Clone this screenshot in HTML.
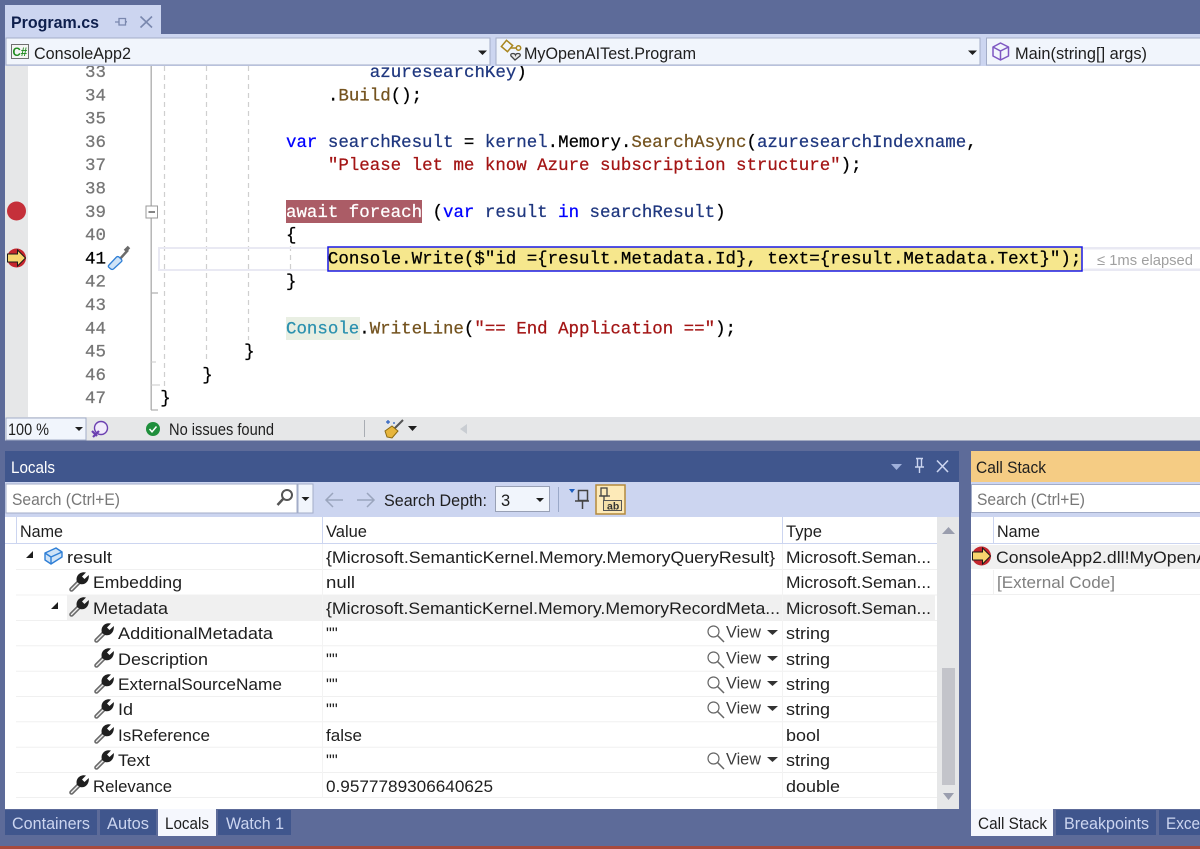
<!DOCTYPE html>
<html><head><meta charset="utf-8"><title>Program.cs</title>
<style>
html,body{margin:0;padding:0;background:#5d6b99}
svg{display:block;position:absolute;left:0;top:0}
text{white-space:pre}
.u{font-family:"Liberation Sans",sans-serif;font-size:16.5px;fill:#1e1e1e}
.c{font-family:"Liberation Mono",monospace;font-size:17.45px;fill:#000;stroke:#000;stroke-width:.25px}
.n{font-family:"Liberation Mono",monospace;font-size:17.45px;fill:#767676;stroke:#767676;stroke-width:.25px}
.k{fill:#0000ff;stroke:#0000ff}.l{fill:#1f377f;stroke:#1f377f}.m{fill:#74531f;stroke:#74531f}.s{fill:#a31515;stroke:#a31515}.t{fill:#2b91af;stroke:#2b91af}.b{fill:#000;stroke:#000}.wh{fill:#fff;stroke:#fff}
</style></head><body>
<svg width="1200" height="849" viewBox="0 0 1200 849" xmlns="http://www.w3.org/2000/svg">
<defs>
<g id="w">
<path d="M2.500 17.500 L10.500 9.500" stroke="#6a6a6a" stroke-width="4.600" stroke-linecap="round" fill="none"/>
<path d="M2.500 17.500 L10.500 9.500" stroke="#f0f0f0" stroke-width="1.400" stroke-linecap="round" fill="none"/>
<path d="M8 10 C6 4 11 -1 17 .5 L13 4.500 L15.500 7 L19.800 3 C20.500 9 16 13.500 11 12 Z" fill="#1f1f1f"/>
</g>
<g id="v">
<circle cx="6.500" cy="6.500" r="5.500" fill="none" stroke="#666" stroke-width="1.200"/>
<path d="M10.500 10.500 L17 17" stroke="#666" stroke-width="1.500"/>
<text class="u" x="19" y="12.500" textLength="35" lengthAdjust="spacingAndGlyphs" style="fill:#3c3c3c">View</text>
<path d="M60 5 H71 L65.500 10 Z" fill="#333"/>
</g>
<g id="ar">
<circle cx="0" cy="0" r="9.500" fill="#c4262e"/>
<path d="M-9 -4 H1 V-8 L9 0 L1 8 V4 H-9 Z" fill="#f7d56e" stroke="#1a1a1a" stroke-width="1"/>
</g>
<clipPath id="ed"><rect x="5" y="66" width="1195" height="351"/></clipPath>
</defs>

<rect width="1200" height="849" fill="#5d6b99"/>
<rect x="0" y="846" width="1200" height="3" fill="#a84a3c"/>

<!-- Editor -->
<rect x="5" y="65" width="1195" height="352" fill="#fff"/>
<rect x="5" y="65" width="23" height="352" fill="#e6e7e8"/>
<rect x="150.500" y="65" width="1.400" height="345" fill="#b0b0b0"/>
<path d="M164.500 66V386M206.500 66V362M248.500 66V340M290.500 246V270" stroke="#cfcfcf" stroke-width="1.200" stroke-dasharray="5 4" fill="none"/>
<path d="M151 293H158M151 410H158" stroke="#b0b0b0" stroke-width="1.300"/>
<path d="M151 362H156M151 385H160" stroke="#c9c9c9" stroke-width="1"/>
<rect x="146" y="206" width="11.500" height="12" fill="#fff" stroke="#9a9a9a" stroke-width="1"/>
<path d="M148.500 212H155" stroke="#444" stroke-width="1.300"/>

<rect x="159" y="248" width="1041" height="22" fill="none" stroke="#e9e9f3" stroke-width="2"/>
<rect x="286" y="200" width="136" height="23" fill="#ab5c66"/>
<rect x="286" y="317" width="74" height="23" fill="#e9efe3"/>
<rect x="328" y="247" width="754" height="24" fill="#f6e78d" stroke="#1a1ae6" stroke-width="1.500"/>

<g clip-path="url(#ed)"><g transform="translate(0,-.7)">
<text class="n" x="85" y="77.500">33</text>
<text class="n" x="85" y="101">34</text>
<text class="n" x="85" y="124.300">35</text>
<text class="n" x="85" y="147.600">36</text>
<text class="n" x="85" y="170.900">37</text>
<text class="n" x="85" y="194.200">38</text>
<text class="n" x="85" y="217.500">39</text>
<text class="n" x="85" y="240.800">40</text>
<text class="n b" x="85" y="264.100">41</text>
<text class="n" x="85" y="287.400">42</text>
<text class="n" x="85" y="310.700">43</text>
<text class="n" x="85" y="334">44</text>
<text class="n" x="85" y="357.300">45</text>
<text class="n" x="85" y="380.600">46</text>
<text class="n" x="85" y="403.900">47</text>

<text class="c l" x="369.800" y="77.500">azuresearchKey<tspan class="b">)</tspan></text>
<text class="c" x="327.900" y="101">.<tspan class="m">Build</tspan>();</text>
<text class="c" x="286" y="147.600"><tspan class="k">var</tspan> <tspan class="l">searchResult</tspan> = <tspan class="l">kernel</tspan>.Memory.<tspan class="m">SearchAsync</tspan>(<tspan class="l">azuresearchIndexname</tspan>,</text>
<text class="c s" x="327.900" y="170.900">"Please let me know Azure subscription structure"<tspan class="b">);</tspan></text>
<text class="c" x="286" y="217.500"><tspan class="wh">await foreach</tspan> (<tspan class="k">var</tspan> <tspan class="l">result</tspan> <tspan class="k">in</tspan> <tspan class="l">searchResult</tspan>)</text>
<text class="c" x="286" y="240.800">{</text>
<text class="c" x="327.900" y="264.100">Console.Write($"id ={result.Metadata.Id}, text={result.Metadata.Text}");</text>
<text class="c" x="286" y="287.400">}</text>
<text class="c" x="286" y="334"><tspan class="t">Console</tspan>.<tspan class="m">WriteLine</tspan>(<tspan class="s">"== End Application =="</tspan>);</text>
<text class="c" x="244.100" y="357.300">}</text>
<text class="c" x="202.200" y="380.600">}</text>
<text class="c" x="160.300" y="403.900">}</text>
</g></g>

<rect x="1088" y="248" width="112" height="22" fill="#fff"/>
<path d="M1084 248.500H1200M1084 269.500H1200" stroke="#e9e9f3" stroke-width="2"/>
<text class="u" x="1097" y="265" textLength="96" lengthAdjust="spacingAndGlyphs" style="fill:#a0a0a0;font-size:15px">≤ 1ms elapsed</text>

<circle cx="16.500" cy="211" r="9.500" fill="#c5303a"/>
<use href="#ar" x="16.500" y="258"/>
<!-- screwdriver icon -->
<path d="M119 260 L128 250" stroke="#6b6b6b" stroke-width="2.500"/>
<path d="M125 251 L129 247" stroke="#6b6b6b" stroke-width="3.500"/>
<path d="M109 265 L116.500 257 Q118 256 119.500 257.500 L121.500 259.500 Q122.500 261 121 262 L113.500 269 Q112 270 110.500 268.700 L108.500 267 Q108 266 109 265 Z" fill="#cfe3f7" stroke="#2f7fd6" stroke-width="1.300"/>

<!-- Tab strip -->
<rect x="5" y="5" width="156" height="29" fill="#ccd5f0"/>
<rect x="5" y="34" width="1195" height="3" fill="#ccd5f0"/>
<text class="u" x="11" y="28" textLength="88" lengthAdjust="spacingAndGlyphs" style="font-weight:bold;fill:#0e1f4d;font-size:16.500px">Program.cs</text>
<path d="M115 22H119M119 18.500H125.500V25H119Z M125.500 21.800H127" fill="none" stroke="#7a88ae" stroke-width="1.300"/>
<path d="M140.500 16.500L152 27.500M152 16.500L140.500 27.500" stroke="#7a88ae" stroke-width="1.600"/>

<!-- Nav bar -->
<rect x="0" y="34" width="5" height="32" fill="#5d6b99"/>
<rect x="5" y="37" width="1195" height="29" fill="#ccd5f0"/>
<rect x="6" y="38" width="484" height="27" fill="#f1f5fc" stroke="#a3adc8" stroke-width="1"/>
<rect x="496" y="38" width="484" height="27" fill="#f1f5fc" stroke="#a3adc8" stroke-width="1"/>
<rect x="986.500" y="38" width="220" height="27" fill="#f1f5fc" stroke="#a3adc8" stroke-width="1"/>
<path d="M478 50.500H487L482.500 55Z M968 50.500H977L972.500 55Z" fill="#1e1e1e"/>
<rect x="11.500" y="44.500" width="17" height="14" fill="#f4f4f4" stroke="#6f6f6f" stroke-width="1"/>
<text x="12.500" y="56" style="font-family:'Liberation Sans',sans-serif;font-weight:bold;font-size:11.500px;fill:#1d8a1d">C#</text>
<text class="u" x="34" y="59" textLength="97" lengthAdjust="spacingAndGlyphs">ConsoleApp2</text>
<g fill="none" stroke="#a9861f" stroke-width="1.500">
<rect x="503" y="42" width="8" height="8" transform="rotate(40 507 46)"/>
<path d="M511 48 H516"/>
<circle cx="518.500" cy="48" r="2.200"/>
</g>
<path d="M515 57 L511 53 Q510 50.500 513 50.500 Q515 50.500 515.500 52 Q516 50.500 518 50.500 Q521 50.500 520 53 Z" transform="translate(0 3)" fill="#e8e8e8" stroke="#444" stroke-width="1.300"/>
<text class="u" x="524" y="59" textLength="172" lengthAdjust="spacingAndGlyphs">MyOpenAITest.Program</text>
<g fill="none" stroke="#7e57c2" stroke-width="1.500" stroke-linejoin="round">
<path d="M1000.500 43 L1008.500 47 V56 L1000.500 60 L993 56 V47 Z"/>
<path d="M993 47 L1000.500 51 L1008.500 47 M1000.500 51 V60"/>
</g>
<text class="u" x="1015" y="59" textLength="132" lengthAdjust="spacingAndGlyphs">Main(string[] args)</text>

<!-- Status bar -->
<rect x="5" y="417" width="1195" height="23.500" fill="#e6e7e8"/>
<rect x="6" y="418" width="80" height="22" fill="#f1f5fc" stroke="#a3adc8" stroke-width="1"/>
<text class="u" x="8" y="435" textLength="41" lengthAdjust="spacingAndGlyphs">100 %</text>
<path d="M75 427H83L79 431Z" fill="#1e1e1e"/>
<circle cx="101" cy="428" r="6.500" fill="#f1eafb" stroke="#6b3fb0" stroke-width="1.400"/>
<path d="M99 428h.01M103 428h.01" stroke="#6b3fb0" stroke-width="1.500"/>
<path d="M93 437 L99 431 M92 431 L97 436" stroke="#6b3fb0" stroke-width="2.200"/>
<circle cx="153" cy="429" r="7" fill="#1f8f3c"/>
<path d="M149.500 429 L152 431.800 L156.500 426.500" fill="none" stroke="#fff" stroke-width="1.500"/>
<text class="u" x="169" y="435" textLength="105" lengthAdjust="spacingAndGlyphs">No issues found</text>
<rect x="364" y="420" width="1" height="17" fill="#a9adb3"/>
<path d="M403 420 L394 429" stroke="#555" stroke-width="2"/>
<path d="M385 431 L392 426 L398 431 L392 438 L387 437 Z" fill="#e6b53c" stroke="#8a6a10" stroke-width="1"/>
<path d="M386 422h4M388 420v4M393 423h2" stroke="#2a5fbf" stroke-width="1.200"/>
<path d="M408 426H417L412.500 431Z" fill="#1e1e1e"/>
<path d="M467 424V434L460 429Z" fill="#c9cdd2"/>

<!-- Locals -->
<rect x="5" y="451" width="954" height="31" fill="#40568d"/>
<rect x="5" y="482" width="954" height="35" fill="#ccd5f0"/>
<rect x="5" y="517" width="932" height="292" fill="#fff"/>
<rect x="937" y="517" width="22" height="292" fill="#e6e7e8"/>
<rect x="942" y="668" width="13" height="117" fill="#c3c4ca"/>
<path d="M942 534H955L948.500 527Z M943 793H954L948.500 800Z" fill="#9a9eae"/>
<text class="u" x="11" y="473" textLength="44" lengthAdjust="spacingAndGlyphs" style="fill:#fff">Locals</text>
<path d="M891 464H902L896.500 470Z" fill="#9fb0db"/>
<path d="M916 458.500H923M917.500 459V467H921.500V459M915 467H924M919.500 467V473" fill="none" stroke="#ccd5f0" stroke-width="1.400"/>
<path d="M937 460.500L948 472M948 460.500L937 472" stroke="#ccd5f0" stroke-width="1.600"/>

<rect x="6" y="484" width="291" height="29" fill="#fff" stroke="#a3adc8" stroke-width="1"/>
<text class="u" x="12" y="505" textLength="108" lengthAdjust="spacingAndGlyphs" style="fill:#777">Search (Ctrl+E)</text>
<circle cx="287" cy="495" r="5" fill="none" stroke="#555" stroke-width="2"/>
<path d="M283.500 498.500 L277.500 505" stroke="#555" stroke-width="2.500"/>
<rect x="298" y="484" width="15" height="29" fill="#f1f5fc" stroke="#a3adc8" stroke-width="1"/>
<path d="M301.500 497H309.500L305.500 501Z" fill="#1e1e1e"/>
<path d="M343 500H326M333 493L326 500L333 507" fill="none" stroke="#9aa5bd" stroke-width="1.500"/>
<path d="M357 500H374M367 493L374 500L367 507" fill="none" stroke="#9aa5bd" stroke-width="1.500"/>
<text class="u" x="384" y="506" textLength="103" lengthAdjust="spacingAndGlyphs">Search Depth:</text>
<rect x="495.500" y="486.500" width="54" height="25" fill="#f1f5fc" stroke="#98a0b5" stroke-width="1"/>
<text class="u" x="501" y="506">3</text>
<path d="M536 498H544L540 502Z" fill="#1e1e1e"/>
<rect x="558" y="487" width="1" height="25" fill="#9aa8c8"/>
<path d="M569 489H575L572 493Z" fill="#1f5fbf"/>
<rect x="578.500" y="490.500" width="9" height="10" fill="none" stroke="#444" stroke-width="1.500"/>
<path d="M575 501H589M582.500 501V509" stroke="#444" stroke-width="1.500"/>
<rect x="596" y="485" width="29" height="29" fill="#fdeab8" stroke="#b38a3c" stroke-width="1.500"/>
<rect x="601" y="488" width="6" height="8" fill="none" stroke="#444" stroke-width="1.300"/>
<path d="M599 496H610M604 496V503" stroke="#444" stroke-width="1.300"/>
<rect x="603.500" y="500.500" width="18" height="10" fill="#f4dfa8" stroke="#555" stroke-width="1"/>
<text x="607" y="509.500" style="font-family:'Liberation Sans',sans-serif;font-weight:bold;font-size:10.500px;fill:#333">ab</text>

<!-- Locals grid -->
<path d="M5 543.500H937" stroke="#ccd5f0" stroke-width="1"/>
<path d="M16.500 517V543M322.500 517V543M782.500 517V543" stroke="#ccd5f0" stroke-width="1"/>
<rect x="67" y="595" width="868" height="25" fill="#f0f0f0"/>
<path d="M16 569.500H937M16 595H937M16 620.500H937M16 645.800H937M16 671.200H937M16 696.500H937M16 721.800H937M16 747.200H937M16 772.500H937M16 797.500H937" stroke="#f0f0f0" stroke-width="1"/>
<path d="M322.500 544V798M782.500 544V798" stroke="#f3f3f3" stroke-width="1"/>
<text class="u" x="20" y="537" textLength="43" lengthAdjust="spacingAndGlyphs">Name</text>
<text class="u" x="326" y="537" textLength="41" lengthAdjust="spacingAndGlyphs">Value</text>
<text class="u" x="786" y="537" textLength="36" lengthAdjust="spacingAndGlyphs">Type</text>

<path d="M33 551V558H26Z M58 602V609H51Z" fill="#1e1e1e"/>
<g fill="#cfe3f7" stroke="#2f7fd6" stroke-width="1.400" stroke-linejoin="round">
<path d="M45 553 L56 548 L62 552 L62 557 L51 564 L45 560 Z"/>
<path d="M45 553 L51 557 L62 552 M51 557V564" fill="none"/>
</g>
<text class="u" x="67" y="563" textLength="45" lengthAdjust="spacingAndGlyphs">result</text>
<text class="u" x="326" y="563" textLength="449" lengthAdjust="spacingAndGlyphs">{Microsoft.SemanticKernel.Memory.MemoryQueryResult}</text>
<text class="u" x="786" y="563" textLength="145" lengthAdjust="spacingAndGlyphs">Microsoft.Seman...</text>

<use href="#w" x="69" y="572"/>
<text class="u" x="93" y="588" textLength="89" lengthAdjust="spacingAndGlyphs">Embedding</text>
<text class="u" x="326" y="588" textLength="29" lengthAdjust="spacingAndGlyphs">null</text>
<text class="u" x="786" y="588" textLength="145" lengthAdjust="spacingAndGlyphs">Microsoft.Seman...</text>

<use href="#w" x="69" y="597"/>
<text class="u" x="93" y="614" textLength="75" lengthAdjust="spacingAndGlyphs">Metadata</text>
<text class="u" x="326" y="614" textLength="454" lengthAdjust="spacingAndGlyphs">{Microsoft.SemanticKernel.Memory.MemoryRecordMeta...</text>
<text class="u" x="786" y="614" textLength="145" lengthAdjust="spacingAndGlyphs">Microsoft.Seman...</text>

<use href="#w" x="94" y="623"/>
<text class="u" x="118" y="639" textLength="155" lengthAdjust="spacingAndGlyphs">AdditionalMetadata</text>
<text class="u" x="326" y="639">""</text>
<use href="#v" x="707" y="625"/>
<text class="u" x="786" y="639" textLength="44" lengthAdjust="spacingAndGlyphs">string</text>

<use href="#w" x="94" y="648"/>
<text class="u" x="118" y="665" textLength="90" lengthAdjust="spacingAndGlyphs">Description</text>
<text class="u" x="326" y="665">""</text>
<use href="#v" x="707" y="651"/>
<text class="u" x="786" y="665" textLength="44" lengthAdjust="spacingAndGlyphs">string</text>

<use href="#w" x="94" y="674"/>
<text class="u" x="118" y="690" textLength="164" lengthAdjust="spacingAndGlyphs">ExternalSourceName</text>
<text class="u" x="326" y="690">""</text>
<use href="#v" x="707" y="676"/>
<text class="u" x="786" y="690" textLength="44" lengthAdjust="spacingAndGlyphs">string</text>

<use href="#w" x="94" y="699"/>
<text class="u" x="118" y="715" textLength="15" lengthAdjust="spacingAndGlyphs">Id</text>
<text class="u" x="326" y="715">""</text>
<use href="#v" x="707" y="701"/>
<text class="u" x="786" y="715" textLength="44" lengthAdjust="spacingAndGlyphs">string</text>

<use href="#w" x="94" y="724"/>
<text class="u" x="118" y="741" textLength="92" lengthAdjust="spacingAndGlyphs">IsReference</text>
<text class="u" x="326" y="741" textLength="36" lengthAdjust="spacingAndGlyphs">false</text>
<text class="u" x="786" y="741" textLength="34" lengthAdjust="spacingAndGlyphs">bool</text>

<use href="#w" x="94" y="750"/>
<text class="u" x="118" y="766" textLength="32" lengthAdjust="spacingAndGlyphs">Text</text>
<text class="u" x="326" y="766">""</text>
<use href="#v" x="707" y="752"/>
<text class="u" x="786" y="766" textLength="44" lengthAdjust="spacingAndGlyphs">string</text>

<use href="#w" x="69" y="775"/>
<text class="u" x="93" y="792" textLength="79" lengthAdjust="spacingAndGlyphs">Relevance</text>
<text class="u" x="326" y="792" textLength="167" lengthAdjust="spacingAndGlyphs">0.9577789306640625</text>
<text class="u" x="786" y="792" textLength="54" lengthAdjust="spacingAndGlyphs">double</text>

<!-- Locals tabs -->
<rect x="5" y="810" width="92" height="25" fill="#40568d"/>
<rect x="100" y="810" width="56" height="25" fill="#40568d"/>
<rect x="158" y="809" width="58" height="27" fill="#f5f7fd"/>
<rect x="218" y="810" width="73" height="25" fill="#40568d"/>
<text class="u" x="12" y="829" textLength="78" lengthAdjust="spacingAndGlyphs" style="fill:#ccd5f0">Containers</text>
<text class="u" x="107" y="829" textLength="42" lengthAdjust="spacingAndGlyphs" style="fill:#ccd5f0">Autos</text>
<text class="u" x="165" y="829" textLength="44" lengthAdjust="spacingAndGlyphs">Locals</text>
<text class="u" x="226" y="829" textLength="58" lengthAdjust="spacingAndGlyphs" style="fill:#ccd5f0">Watch 1</text>

<!-- Call stack -->
<rect x="971" y="451" width="229" height="31" fill="#f5cc84"/>
<rect x="971" y="482" width="229" height="35" fill="#ccd5f0"/>
<rect x="971" y="517" width="229" height="292" fill="#fff"/>
<text class="u" x="976" y="473" textLength="70" lengthAdjust="spacingAndGlyphs">Call Stack</text>
<rect x="971.500" y="484.500" width="240" height="28" fill="#fff" stroke="#a3adc8" stroke-width="1"/>
<text class="u" x="977" y="505" textLength="108" lengthAdjust="spacingAndGlyphs" style="fill:#777">Search (Ctrl+E)</text>
<path d="M971 543.500H1200M993.500 517V543" stroke="#ccd5f0" stroke-width="1"/>
<text class="u" x="997" y="537" textLength="43" lengthAdjust="spacingAndGlyphs">Name</text>
<rect x="971" y="545" width="229" height="24" fill="#f0f0f0"/>
<path d="M971 594.500H1200M993.500 570V594" stroke="#f0f0f0" stroke-width="1"/>
<use href="#ar" x="981.500" y="556"/>
<text class="u" x="996" y="563" textLength="212" lengthAdjust="spacingAndGlyphs">ConsoleApp2.dll!MyOpenA</text>
<text class="u" x="997" y="588" textLength="118" lengthAdjust="spacingAndGlyphs" style="fill:#808080">[External Code]</text>

<rect x="971" y="809" width="82" height="27" fill="#f5f7fd"/>
<rect x="1056" y="810" width="100" height="25" fill="#40568d"/>
<rect x="1159" y="810" width="41" height="25" fill="#40568d"/>
<text class="u" x="978" y="829" textLength="69" lengthAdjust="spacingAndGlyphs">Call Stack</text>
<text class="u" x="1064" y="829" textLength="85" lengthAdjust="spacingAndGlyphs" style="fill:#ccd5f0">Breakpoints</text>
<text class="u" x="1166" y="829" textLength="34" lengthAdjust="spacingAndGlyphs" style="fill:#ccd5f0">Exce</text>
</svg>
</body></html>
